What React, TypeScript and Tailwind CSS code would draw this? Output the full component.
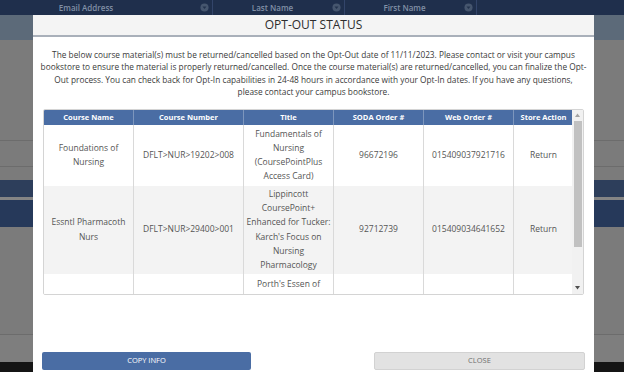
import React from "react";

const FilterIcon = () => (
  <svg width="9" height="9" viewBox="0 0 10 10" className="shrink-0">
    <circle cx="5" cy="5" r="4.5" fill="#46566e" />
    <path d="M2.8 3.8 L7.2 3.8 L5 6.6 Z" fill="#22324d" />
  </svg>
);

const HeaderCell = ({ label, w, extra }: { label: string; w: string; extra?: string }) => (
  <div className={`flex items-center h-full border-r border-[#33456a] pr-[3px] ${w} ${extra ?? ""}`}>
    <span className="flex-1 text-center text-[8px] font-semibold text-[#8190a6]">{label}</span>
    <FilterIcon />
  </div>
);

type Row = { name: string[]; num: string; title: string[]; soda: string; web: string; action: string; h: string; bg: string };

const rows: Row[] = [
  {
    name: ["Foundations of", "Nursing"],
    num: "DFLT>NUR>19202>008",
    title: ["Fundamentals of", "Nursing", "(CoursePointPlus", "Access Card)"],
    soda: "96672196",
    web: "015409037921716",
    action: "Return",
    h: "h-[61px]",
    bg: "bg-white",
  },
  {
    name: ["Essntl Pharmacoth", "Nurs"],
    num: "DFLT>NUR>29400>001",
    title: ["Lippincott", "CoursePoint+", "Enhanced for Tucker:", "Karch's Focus on", "Nursing", "Pharmacology"],
    soda: "92712739",
    web: "015409034641652",
    action: "Return",
    h: "h-[88px]",
    bg: "bg-[#f3f3f3]",
  },
  {
    name: [""],
    num: "",
    title: ["Porth's Essen of"],
    soda: "",
    web: "",
    action: "",
    h: "h-[22px]",
    bg: "bg-white",
  },
];

const colW = ["w-[90px]", "w-[110px]", "w-[90px]", "w-[90px]", "w-[90px]", "w-[59px]"];
const heads = ["Course Name", "Course Number", "Title", "SODA Order #", "Web Order #", "Store Action"];

const para = [
  "The below course material(s) must be returned/cancelled based on the Opt-Out date of 11/11/2023. Please contact or visit your campus",
  "bookstore to ensure the material is properly returned/cancelled. Once the course material(s) are returned/cancelled, you can finalize the Opt-",
  "Out process. You can check back for Opt-In capabilities in 24-48 hours in accordance with your Opt-In dates. If you have any questions,",
  "please contact your campus bookstore.",
];

const Cell = ({ w, lines, last }: { w: string; lines: string[]; last?: boolean }) => (
  <div className={`${w} shrink-0 flex flex-col items-center justify-center text-center px-[1px] ${last ? "" : "border-r border-[#d9d9d9]"}`}>
    {lines.map((l, i) => (
      <span key={i} className="whitespace-nowrap">{l}</span>
    ))}
  </div>
);

export default function App() {
  return (
    <div className="relative w-[624px] h-[372px] overflow-hidden bg-[#7b7b7b] font-['Open_Sans',sans-serif]">
      {/* background page */}
      <div className="flex flex-col">
        <div className="h-[15px] bg-[#1f2f4c] flex">
          <HeaderCell label="Email Address" w="w-[241px]" extra="ml-[-28px]" />
          <HeaderCell label="Last Name" w="w-[132px]" />
          <HeaderCell label="First Name" w="w-[132px]" />
        </div>
        <div className="h-[25px] bg-[#5c6a79]" />
        <div className="h-[100px]" />
        <div className="h-[27px] border-t border-b border-[#6c6c6c]" />
        <div className="h-[13px]" />
        <div className="h-[17px] bg-[#2d3e5b]" />
        <div className="h-[3px] bg-[#858585]" />
        <div className="h-[27px] bg-[#26395a]" />
        <div className="h-[108px] border-b border-[#6c6c6c]" />
        <div className="h-[27px] bg-[#7e7e7e]" />
        <div className="h-[12px] bg-[#151515]" />
      </div>

      {/* modal */}
      <div className="absolute left-[33px] top-[15px] w-[561px] h-[370px] bg-white flex flex-col">
        <div className="h-[22px] bg-[#f4f4f4] border-b-2 border-[#a9b0ba] flex items-center justify-center">
          <span className="text-[12px] text-[#2d2d2d] leading-none">OPT-OUT STATUS</span>
        </div>
        <div className="pt-[12px] flex flex-col items-center text-[8.3px] leading-[12.4px] text-[#3a3a3a]">
          {para.map((l, i) => (
            <span key={i} className="whitespace-nowrap">{l}</span>
          ))}
        </div>

        <div className="mx-[10px] mt-[10px] h-[186px] border border-[#d4d4d4] rounded-[2px] flex overflow-hidden">
          <div className="w-[529px] flex flex-col overflow-hidden">
            <div className="h-[15px] shrink-0 bg-[#4a6da4] flex text-white text-[7.5px] font-bold">
              {heads.map((h, i) => (
                <div key={h} className={`${colW[i]} shrink-0 flex items-center justify-center ${i < 5 ? "border-r border-[#7d96bd]" : ""}`}>
                  {h}
                </div>
              ))}
            </div>
            {rows.map((r, i) => (
              <div key={i} className={`${r.h} shrink-0 ${r.bg} flex text-[8.5px] leading-[14.3px] text-[#555]`}>
                <Cell w={colW[0]} lines={r.name} />
                <Cell w={colW[1]} lines={[r.num]} />
                <div className={`${colW[2]} shrink-0 flex flex-col items-center ${i === 2 ? "justify-start pt-[3px]" : "justify-center"} text-center border-r border-[#d9d9d9]`}>
                  {r.title.map((l, k) => (
                    <span key={k} className="whitespace-nowrap">{l}</span>
                  ))}
                </div>
                <Cell w={colW[3]} lines={[r.soda]} />
                <Cell w={colW[4]} lines={[r.web]} />
                <Cell w={colW[5]} lines={[r.action]} last />
              </div>
            ))}
          </div>
          <div className="w-[11px] shrink-0 bg-[#f1f1f1] flex flex-col items-center">
            <div className="h-[11px] flex items-center justify-center">
              <svg width="5" height="4" viewBox="0 0 5 4"><path d="M0 4 L2.5 0.5 L5 4 Z" fill="#a3a3a3" /></svg>
            </div>
            <div className="w-[8px] h-[126px] bg-[#c1c1c1]" />
            <div className="flex-1" />
            <div className="h-[11px] flex items-center justify-center">
              <svg width="5" height="4" viewBox="0 0 5 4"><path d="M0 0 L5 0 L2.5 3.5 Z" fill="#505050" /></svg>
            </div>
          </div>
        </div>

        <div className="mt-[57px] px-[9px] flex justify-between">
          <button className="w-[209px] h-[18px] rounded-[2px] bg-[#4a6da4] text-white text-[7.5px] flex items-center justify-center">
            COPY INFO
          </button>
          <button className="w-[211px] h-[18px] rounded-[2px] bg-[#e2e2e2] border border-[#d2d2d2] text-[#6e6e6e] text-[7.5px] flex items-center justify-center">
            CLOSE
          </button>
        </div>
      </div>
    </div>
  );
}
